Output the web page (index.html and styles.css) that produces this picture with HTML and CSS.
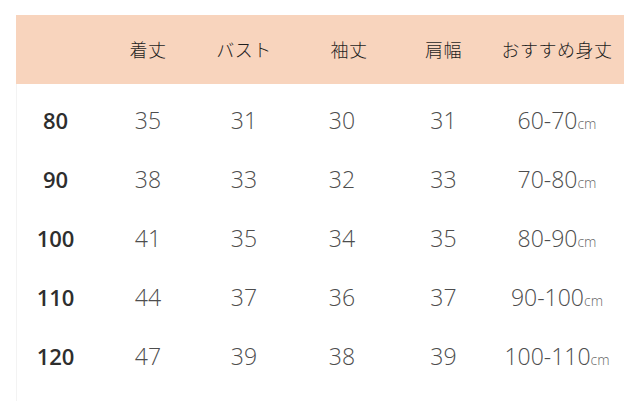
FILE: index.html
```html
<!DOCTYPE html>
<html lang="ja">
<head>
<meta charset="utf-8">
<title>サイズ表</title>
<link rel="stylesheet" href="styles.css">
</head>
<body>
<div class="sheet">
  <div class="head">
    <div class="cell"></div>
    <div class="cell">着丈</div>
    <div class="cell">バスト</div>
    <div class="cell shift">袖丈</div>
    <div class="cell">肩幅</div>
    <div class="cell">おすすめ身丈</div>
  </div>
  <div class="body">
    <div class="row"><div class="cell size">80</div><div class="cell">35</div><div class="cell">31</div><div class="cell">30</div><div class="cell">31</div><div class="cell">60-70<span class="unit">cm</span></div></div>
    <div class="row"><div class="cell size">90</div><div class="cell">38</div><div class="cell">33</div><div class="cell">32</div><div class="cell">33</div><div class="cell">70-80<span class="unit">cm</span></div></div>
    <div class="row"><div class="cell size">100</div><div class="cell">41</div><div class="cell">35</div><div class="cell">34</div><div class="cell">35</div><div class="cell">80-90<span class="unit">cm</span></div></div>
    <div class="row"><div class="cell size">110</div><div class="cell">44</div><div class="cell">37</div><div class="cell">36</div><div class="cell">37</div><div class="cell">90-100<span class="unit">cm</span></div></div>
    <div class="row"><div class="cell size">120</div><div class="cell">47</div><div class="cell">39</div><div class="cell">38</div><div class="cell">39</div><div class="cell">100-110<span class="unit">cm</span></div></div>
  </div>
</div>
</body>
</html>
```

FILE: styles.css
```css
* { box-sizing: border-box; }
html, body { margin: 0; padding: 0; background: #ffffff; }
body { width: 640px; height: 401px; overflow: hidden; }

.sheet {
  padding: 15px 0 0 16px;
}

.head,
.row {
  display: grid;
  grid-template-columns: 79px 106px 86px 110px 93px 134px;
  width: 608px;
}

.head {
  height: 69px;
  padding-bottom: 2px;
  background: #f8d4bd;
  align-items: center;
  font-family: "Noto Sans CJK JP", "Noto Sans", sans-serif;
  font-weight: 300;
  font-size: 18px;
  color: #1e1e1e;
}

.cell {
  text-align: center;
  white-space: nowrap;
}

.head .cell { letter-spacing: 0.5px; }
.head .shift { padding-left: 14px; }

.body {
  padding-top: 6px;
  border-left: 1px solid #f3f3f3;
  height: 317px;
}

.row {
  height: 59px;
  align-items: center;
  font-family: "Open Sans", "Noto Sans", sans-serif;
  font-weight: 300;
  font-size: 23px;
  color: #4d4d4d;
  margin-left: -1px;
}

.row .size {
  font-weight: 600;
  font-size: 22px;
  color: #2e2e2e;
}

.unit {
  font-size: 14px;
  color: #666;
}
```
